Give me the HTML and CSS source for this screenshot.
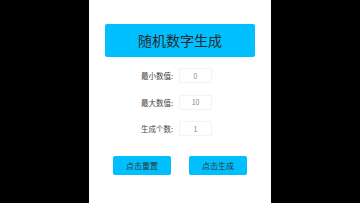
FILE: index.html
```html
<!DOCTYPE html>
<html lang="zh-CN">
<head>
  <meta charset="UTF-8">
  <meta name="viewport" content="width=device-width, initial-scale=1.0">
  <title>随机数字生成</title>
  <link rel="stylesheet" href="styles.css">
</head>
<body>
  <div class="page">
    <h1 class="title">随机数字生成</h1>
    <div class="form">
      <div class="row">
        <span class="label">最小数值:</span>
        <input id="min" class="field" type="text" value="0">
      </div>
      <div class="row">
        <span class="label">最大数值:</span>
        <input id="max" class="field" type="text" value="10">
      </div>
      <div class="row">
        <span class="label">生成个数:</span>
        <input id="count" class="field" type="text" value="1">
      </div>
    </div>
    <div class="actions">
      <button class="btn">点击重置</button>
      <button class="btn">点击生成</button>
    </div>
  </div>
</body>
</html>
```

FILE: styles.css
```css
html, body {
  margin: 0;
  height: 100%;
  background: #000;
}
body {
  font-family: "Noto Sans CJK SC", "Noto Sans", sans-serif;
  color: #333;
}
.page {
  width: 182px;
  height: 203px;
  margin: 0 auto;
  background: #fff;
  box-sizing: border-box;
  padding-top: 24px;
  display: flex;
  flex-direction: column;
  align-items: center;
}
.title {
  width: 150px;
  height: 33px;
  margin: 0;
  background: #00bfff;
  border-radius: 2px;
  font-size: 14px;
  font-weight: normal;
  line-height: 33px;
  text-align: center;
  color: #2a2a2a;
}
.form {
  margin-top: 11px;
  display: flex;
  flex-direction: column;
  gap: 11.5px;
  padding-right: 7px;
}
.row {
  display: flex;
  align-items: center;
  justify-content: center;
  gap: 6px;
}
.label {
  font-size: 7.5px;
  color: #444;
}
.field {
  width: 33px;
  height: 15px;
  box-sizing: border-box;
  padding: 0;
  border: 1px solid #f3f3f3;
  border-radius: 1px;
  font-family: inherit;
  font-size: 7px;
  color: #888;
  text-align: center;
  outline: none;
}
.actions {
  margin-top: 20px;
  display: flex;
  gap: 18px;
}
.btn {
  width: 58px;
  height: 19px;
  padding: 0;
  border: none;
  border-radius: 2px;
  background: #00bfff;
  font-family: inherit;
  font-size: 8px;
  color: #333;
  cursor: pointer;
}
```
